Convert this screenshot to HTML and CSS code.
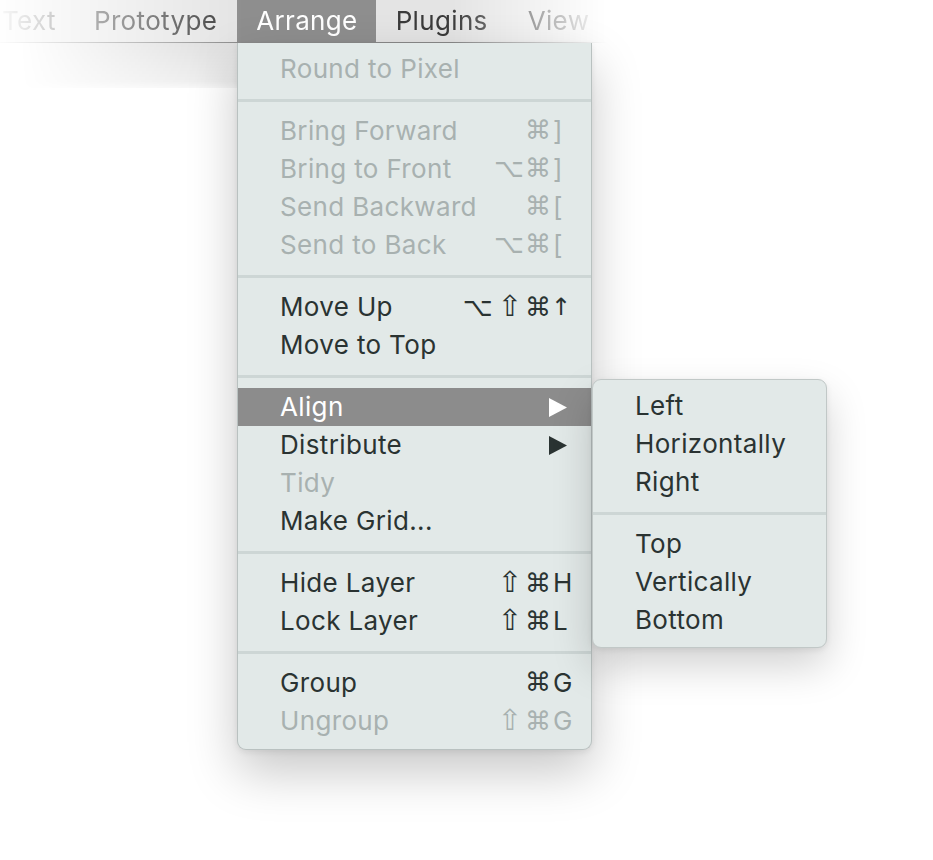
FILE: index.html
```html
<!DOCTYPE html>
<html>
<head>
<meta charset="utf-8">
<link rel="stylesheet" href="styles.css">
</head>
<body>
<div class="screen">
  <div class="barwrap">
    <nav class="menubar">
      <span class="mb-item">Text</span>
      <span class="mb-item">Prototype</span>
      <span class="mb-item active">Arrange</span>
      <span class="mb-item">Plugins</span>
      <span class="mb-item">View</span>
    </nav>
    <div class="barshadow"></div>
  </div>

  <div class="menu main">
    <div class="item disabled"><span class="label">Round to Pixel</span></div>
    <div class="sep"></div>
    <div class="item disabled"><span class="label">Bring Forward</span><span class="mods">⌘</span><span class="key">]</span></div>
    <div class="item disabled"><span class="label">Bring to Front</span><span class="mods">⌥⌘</span><span class="key">]</span></div>
    <div class="item disabled"><span class="label">Send Backward</span><span class="mods">⌘</span><span class="key">[</span></div>
    <div class="item disabled"><span class="label">Send to Back</span><span class="mods">⌥⌘</span><span class="key">[</span></div>
    <div class="sep"></div>
    <div class="item"><span class="label">Move Up</span><span class="mods">⌥<span class="shift">⇧</span>⌘</span><span class="key arrow">↑</span></div>
    <div class="item"><span class="label">Move to Top</span></div>
    <div class="sep"></div>
    <div class="item hl"><span class="label">Align</span><span class="mods"></span><span class="key"><svg class="tri" viewBox="0 0 18 19"><polygon points="0,0 18,9.5 0,19"/></svg></span></div>
    <div class="item"><span class="label">Distribute</span><span class="mods"></span><span class="key"><svg class="tri" viewBox="0 0 18 19"><polygon points="0,0 18,9.5 0,19"/></svg></span></div>
    <div class="item disabled"><span class="label">Tidy</span></div>
    <div class="item"><span class="label">Make Grid...</span></div>
    <div class="sep"></div>
    <div class="item"><span class="label">Hide Layer</span><span class="mods"><span class="shift">⇧</span>⌘</span><span class="key">H</span></div>
    <div class="item"><span class="label">Lock Layer</span><span class="mods"><span class="shift">⇧</span>⌘</span><span class="key">L</span></div>
    <div class="sep"></div>
    <div class="item"><span class="label">Group</span><span class="mods">⌘</span><span class="key">G</span></div>
    <div class="item disabled"><span class="label">Ungroup</span><span class="mods"><span class="shift">⇧</span>⌘</span><span class="key">G</span></div>
  </div>

  <div class="menu sub">
    <div class="item"><span class="label">Left</span></div>
    <div class="item"><span class="label">Horizontally</span></div>
    <div class="item"><span class="label">Right</span></div>
    <div class="sep"></div>
    <div class="item"><span class="label">Top</span></div>
    <div class="item"><span class="label">Vertically</span></div>
    <div class="item"><span class="label">Bottom</span></div>
  </div>
</div>
</body>
</html>
```

FILE: styles.css
```css
html, body {
  margin: 0;
  padding: 0;
  background: #ffffff;
}
body {
  font-family: "Inter", "Noto Sans", "DejaVu Sans", sans-serif;
  font-size: 26px;
  letter-spacing: 0.35px;
  color: #2a3332;
}
.screen {
  position: relative;
  width: 933px;
  height: 860px;
  overflow: hidden;
  background: #ffffff;
}

/* menu bar */
.barwrap {
  position: relative;
}
.menubar {
  display: flex;
  height: 42px;
  margin-left: -18px;
  background: #e4e4e4;
  border-bottom: 1px solid #8c8c8c;
  -webkit-mask-image: linear-gradient(to right, rgba(0,0,0,0) 10px, #000 260px, #000 470px, rgba(0,0,0,0) 625px);
  mask-image: linear-gradient(to right, rgba(0,0,0,0) 10px, #000 260px, #000 470px, rgba(0,0,0,0) 625px);
}
.mb-item {
  display: flex;
  align-items: center;
  padding: 0 20px;
  color: #3b3b3b;
  line-height: 42px;
}
.mb-item:first-child {
  padding-right: 18px;
}
.mb-item.active {
  background: #8e8e8e;
  color: #ffffff;
  padding: 0 18px 0 19px;
}
.barshadow {
  height: 45px;
  width: 237px;
  background: linear-gradient(to bottom, rgba(0,0,0,0.12), rgba(0,0,0,0.07) 85%, rgba(0,0,0,0.03));
  -webkit-mask-image: linear-gradient(to right, rgba(0,0,0,0) 20px, #000 210px);
  mask-image: linear-gradient(to right, rgba(0,0,0,0) 20px, #000 210px);
  box-shadow: 0 18px 30px rgba(0,0,0,0.05);
}

/* menus */
.menu {
  position: absolute;
  background: #e2e9e8;
  box-sizing: border-box;
}
.menu.main {
  left: 237px;
  top: 43px;
  width: 355px;
  padding: 7px 0 9px;
  border: 1px solid #b9c1c0;
  border-top: none;
  border-radius: 0 0 9px 9px;
  box-shadow: 0 22px 50px rgba(0,0,0,0.22), 0 2px 6px rgba(0,0,0,0.08);
}
.menu.sub {
  left: 592px;
  top: 379px;
  width: 235px;
  padding: 7px 0 8px;
  border: 1px solid #c1c8c7;
  border-radius: 9px;
  box-shadow: 0 18px 40px rgba(0,0,0,0.18), 0 2px 6px rgba(0,0,0,0.08);
}
.item {
  display: grid;
  grid-template-columns: 1fr auto 24px;
  align-items: center;
  box-sizing: border-box;
  height: 38px;
  padding: 0 15px 2px 42px;
  white-space: nowrap;
  color: #2a3332;
}
.item.disabled {
  color: #a8b1b0;
}
.item.hl {
  background: #8c8c8c;
  color: #ffffff;
}
.mods {
  text-align: right;
  font-family: "DejaVu Sans", sans-serif;
  font-size: 26px;
  letter-spacing: 1px;
  line-height: 36px;
}
.shift {
  font-size: 29px;
  margin: 0 2px 0 4px;
}
.key {
  padding-left: 1px;
  display: flex;
  align-items: center;
}
.key.arrow {
  font-family: "DejaVu Sans", sans-serif;
  font-size: 24px;
  margin-left: -2px;
}
.tri {
  width: 18px;
  height: 19px;
  margin-left: -4px;
  margin-top: 2px;
  fill: #2a3332;
}
.item.hl .tri {
  fill: #ffffff;
}
.sep {
  height: 24px;
  display: flex;
  align-items: center;
}
.sep::before {
  content: "";
  display: block;
  width: 100%;
  height: 3px;
  background: #cdd6d5;
}
```
